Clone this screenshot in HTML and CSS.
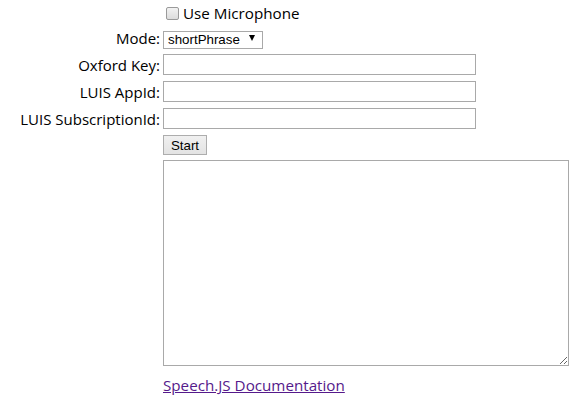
FILE: index.html
```html
<!DOCTYPE html>
<html>
<head>
<meta charset="utf-8">
<link rel="stylesheet" href="styles.css">
</head>
<body>
<div class="form">
  <div class="label"></div>
  <div class="control"><label class="mic"><input type="checkbox" class="check"><span>Use Microphone</span></label></div>

  <div class="label">Mode:</div>
  <div class="control"><span class="select-wrap"><select class="select"><option>shortPhrase</option><option>longDictation</option></select></span></div>

  <div class="label">Oxford Key:</div>
  <div class="control"><input type="text" class="field"></div>

  <div class="label">LUIS AppId:</div>
  <div class="control"><input type="text" class="field"></div>

  <div class="label">LUIS SubscriptionId:</div>
  <div class="control"><input type="text" class="field"></div>

  <div class="label"></div>
  <div class="control"><button class="btn">Start</button></div>

  <div class="label"></div>
  <div class="control top"><textarea class="output"></textarea></div>

  <div class="label"></div>
  <div class="control top"><a class="doc" href="#">Speech.JS Documentation</a></div>
</div>
</body>
</html>
```

FILE: styles.css
```css
html, body {
  margin: 0;
  padding: 0;
  background: #fff;
}
body {
  font-family: "Open Sans", "Noto Sans", sans-serif;
  font-size: 15px;
  color: #000;
}
.form {
  display: grid;
  grid-template-columns: 160px 417px;
  grid-template-rows: 26px 25px 27px 27px 27px 26px 208px 36px;
  column-gap: 3px;
  align-items: center;
}
.label {
  text-align: right;
  white-space: nowrap;
  line-height: 20px;
}
.label:nth-child(3) {
  margin-top: -2px;
}
.control {
  display: flex;
  align-items: center;
}
.control.top {
  align-self: start;
}
.mic {
  display: flex;
  align-items: center;
  gap: 4px;
  padding-left: 3px;
  line-height: 20px;
  font-size: 15.2px;
}
.check {
  appearance: none;
  width: 13px;
  height: 13px;
  margin: 0;
  border: 1px solid #9a9a9a;
  border-radius: 2px;
  background: linear-gradient(#f2f2f2, #dcdcdc);
  box-sizing: border-box;
}
.select-wrap {
  position: relative;
  display: inline-block;
}
.select-wrap::after {
  content: "";
  position: absolute;
  right: 8px;
  top: 7px;
  border-left: 3.5px solid transparent;
  border-right: 3.5px solid transparent;
  border-top: 6px solid #000;
  pointer-events: none;
}
.select {
  appearance: none;
  width: 100px;
  height: 18px;
  margin: 0;
  padding: 0 0 0 4px;
  border: 1px solid #a9a9a9;
  background: #fff;
  font-family: "Liberation Sans", Arial, sans-serif;
  font-size: 13.33px;
  color: #000;
  box-sizing: border-box;
  border-radius: 0;
  line-height: 16px;
}
.field {
  width: 313px;
  height: 21px;
  margin: 0;
  padding: 1px 2px;
  border: 1px solid #a9a9a9;
  box-sizing: border-box;
  font-family: "Liberation Sans", Arial, sans-serif;
  font-size: 13.33px;
  outline: none;
}
.btn {
  width: 44px;
  height: 20px;
  margin: 0;
  padding: 0;
  border: 1px solid #adadad;
  background: linear-gradient(#f0f0f0, #e3e3e3);
  font-family: "Liberation Sans", Arial, sans-serif;
  font-size: 13.33px;
  color: #000;
  box-sizing: border-box;
  border-radius: 0;
}
.output {
  width: 406px;
  height: 206px;
  margin: 2px 0 0 0;
  padding: 2px;
  border: 1px solid #a9a9a9;
  box-sizing: border-box;
  font-family: "Liberation Mono", monospace;
  font-size: 13px;
  resize: both;
  outline: none;
}
.doc {
  margin-top: 8px;
  line-height: 22px;
  font-size: 15.2px;
  color: #551a8b;
  text-decoration: underline;
}
```
